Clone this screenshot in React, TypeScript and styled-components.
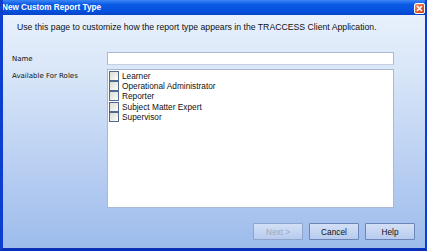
import React from 'react';
import styled, {createGlobalStyle} from 'styled-components';

const Global = createGlobalStyle`
    html, body {
        margin: 0;
        padding: 0;
        background: #ffffff;
    }
    * {
        box-sizing: border-box;
    }
`;

const Window = styled.div`
    width: 427px;
    height: 251px;
    display: flex;
    flex-direction: column;
    background: #0a3fd6;
    border-left: 3px solid #0c3ed0;
    border-right: 2px solid #0c3ed0;
    border-bottom: 3px solid #0a2fb8;
    font-family: "Liberation Sans", Arial, sans-serif;
    overflow: hidden;
`;

const TitleBar = styled.div`
    height: 15px;
    margin: 0 -2px 0 -3px;
    padding: 0 2px 0 2px;
    display: flex;
    align-items: center;
    justify-content: space-between;
    background: linear-gradient(180deg, #3d86f4 0%, #0a5ae6 30%, #0552e0 70%, #0444c8 100%);
`;

const Title = styled.span`
    color: #ffffff;
    font-family: "Liberation Sans", Tahoma, sans-serif;
    font-weight: bold;
    font-size: 8.2px;
`;

const CloseButton = styled.div`
    width: 11px;
    height: 11px;
    margin-top: 1px;
    border: 1px solid #ffffff;
    border-radius: 2px;
    background: linear-gradient(135deg, #f59a78 0%, #e2572a 55%, #c9401a 100%);
    display: flex;
    align-items: center;
    justify-content: center;
`;

const Body = styled.div`
    flex: 1;
    display: flex;
    flex-direction: column;
    padding: 7px 8px 8px 9px;
    background: linear-gradient(180deg, #e8f0fc 0%, #d8e6f8 25%, #b9cff2 65%, #9dbceb 100%);
`;

const Intro = styled.div`
    font-size: 8.7px;
    color: #111111;
    padding-left: 5px;
    height: 11px;
    line-height: 11px;
`;

const Form = styled.div`
    margin-top: 19px;
    display: grid;
    grid-template-columns: 95px 287px;
    row-gap: 4px;
`;

const Label = styled.div`
    font-family: "DejaVu Sans", Tahoma, sans-serif;
    font-size: 7px;
    color: #111111;
    padding-top: 3px;
`;

const TextInput = styled.div`
    height: 13px;
    background: #ffffff;
    border: 1px solid #a9b9d2;
    border-bottom-color: #c6d0e0;
`;

const RoleList = styled.div`
    height: 139px;
    background: #ffffff;
    border: 1px solid #a9b9d2;
    padding: 1px 0 0 1px;
    display: flex;
    flex-direction: column;
`;

const RoleRow = styled.div`
    display: flex;
    align-items: center;
    height: 10.2px;
    gap: 3px;
`;

const CheckBox = styled.span`
    width: 10px;
    height: 10px;
    border: 1px solid #4e6890;
    background: linear-gradient(135deg, #dcdcd6 0%, #f2f2ee 70%, #ffffff 100%);
`;

const RoleName = styled.span`
    font-size: 8.3px;
    color: #111111;
`;

const Footer = styled.div`
    margin-top: auto;
    display: flex;
    justify-content: flex-end;
    gap: 6px;
    padding-right: 2px;
`;

const Button = styled.button<{disabled?: boolean}>`
    width: 50px;
    height: 17px;
    padding: 0;
    border: 1px solid #6a86b8;
    border-radius: 1px;
    background: linear-gradient(180deg, #d3e0f6 0%, #b7cbee 100%);
    font-family: "Liberation Sans", Arial, sans-serif;
    font-size: 8.3px;
    color: ${p => (p.disabled ? '#9aa8c0' : '#111111')};
    ${p => (p.disabled ? 'border-color: #8fa5cc;' : '')}
`;

const roles = [
    'Learner',
    'Operational Administrator',
    'Reporter',
    'Subject Matter Expert',
    'Supervisor',
];

export default function App() {
    return (
        <>
            <Global/>
            <Window>
                <TitleBar>
                    <Title>New Custom Report Type</Title>
                    <CloseButton>
                        <svg width="7" height="7" viewBox="0 0 7 7">
                            <path d="M1 1 L6 6 M6 1 L1 6" stroke="#ffffff" strokeWidth="1.5"/>
                        </svg>
                    </CloseButton>
                </TitleBar>
                <Body>
                    <Intro>Use this page to customize how the report type appears in the TRACCESS Client Application.</Intro>
                    <Form>
                        <Label>Name</Label>
                        <TextInput/>
                        <Label>Available For Roles</Label>
                        <RoleList>
                            {roles.map(role => (
                                <RoleRow key={role}>
                                    <CheckBox/>
                                    <RoleName>{role}</RoleName>
                                </RoleRow>
                            ))}
                        </RoleList>
                    </Form>
                    <Footer>
                        <Button disabled>Next &gt;</Button>
                        <Button>Cancel</Button>
                        <Button>Help</Button>
                    </Footer>
                </Body>
            </Window>
        </>
    );
}
